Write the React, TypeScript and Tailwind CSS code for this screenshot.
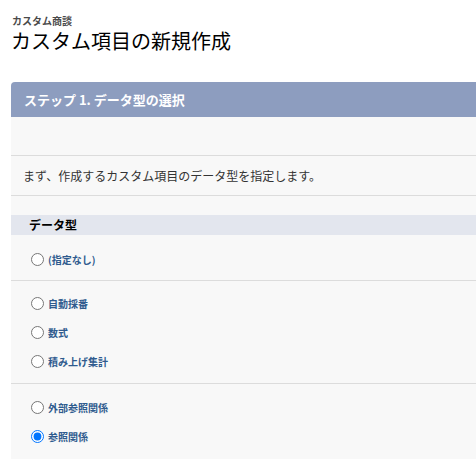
const font = { fontFamily: '"Noto Sans CJK JP", "Noto Sans", sans-serif' };

function Radio({ label, checked = false }: { label: string; checked?: boolean }) {
  return (
    <label className="flex items-center h-[29px] pl-[20px]">
      <input type="radio" name="dtype" defaultChecked={checked} className="m-0 w-[13px] h-[13px]" />
      <span className="ml-[4px] text-[10px] font-bold text-[#2f5b8e]">{label}</span>
    </label>
  );
}

export default function App() {
  return (
    <div className="w-[476px] h-[459px] overflow-hidden bg-white pt-[15px] pl-[11px]" style={font}>
      <p className="text-[10px] leading-[12px] font-bold text-[#4a4a4a] ml-[1px]">カスタム商談</p>
      <h1 className="mt-[3px] text-[20px] leading-[22px] text-black">カスタム項目の新規作成</h1>

      <div className="mt-[30px] w-[520px] rounded-tl-[4px] overflow-hidden bg-[#f8f8f8]">
        <div className="h-[35px] bg-[#8d9dbf] flex items-center pl-[13px] text-white font-bold text-[13px]">
          ステップ 1. データ型の選択
        </div>
        <div className="h-[39px] border-b border-[#dcdcdc]" />
        <div className="h-[40px] border-b border-[#dcdcdc] flex items-center pl-[12px] text-[12px] text-[#333]">
          まず、作成するカスタム項目のデータ型を指定します。
        </div>
        <div className="h-[19px]" />
        <div className="h-[20px] bg-[#e3e6ee] flex items-center pl-[18px] font-bold text-[12px] text-black">
          データ型
        </div>
        <div className="h-[46px] border-b border-[#dcdcdc] pt-[10px]">
          <Radio label="(指定なし)" />
        </div>
        <div className="h-[103px] border-b border-[#dcdcdc] pt-[8px]">
          <Radio label="自動採番" />
          <Radio label="数式" />
          <Radio label="積み上げ集計" />
        </div>
        <div className="pt-[9px] pb-[20px]">
          <Radio label="外部参照関係" />
          <Radio label="参照関係" checked />
        </div>
      </div>
    </div>
  );
}
